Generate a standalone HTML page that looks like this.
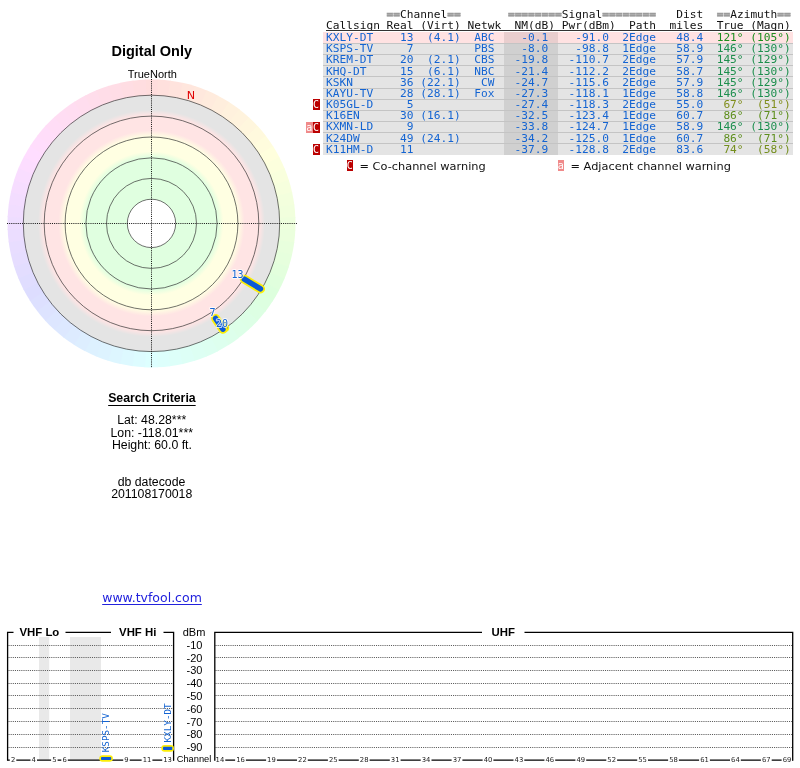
<!DOCTYPE html>
<html><head><meta charset="utf-8"><title>TV Fool - Digital Only</title>
<style>
html,body{margin:0;padding:0;background:#fff;}
body{width:800px;height:768px;position:relative;overflow:hidden;font-family:"Liberation Sans",Arial,sans-serif;color:#000;}
.abs{position:absolute;white-space:pre;}
.c{text-align:center;}
svg{position:absolute;left:0;top:0;}
.mono{font-family:"DejaVu Sans Mono","Liberation Mono",monospace;}
.sans{font-family:"DejaVu Sans","Liberation Sans",sans-serif;}
.row{position:absolute;left:325.9px;height:11px;line-height:11px;font-size:10px;white-space:pre;color:#1464d2;transform:scaleX(1.1187);transform-origin:0 0;}
.g{color:#228844;}
.o{color:#8c8c1e;}
.eq{color:#9c9c9c;font-weight:bold;-webkit-text-stroke:0.5px #9c9c9c;}
.hd{color:#111;}
#w{position:absolute;left:0;top:0;width:800px;height:768px;will-change:transform;background:#fff;}
</style></head><body><div id="w">

<svg width="800" height="768" viewBox="0 0 800 768">
<defs><radialGradient id="rg" gradientUnits="userSpaceOnUse" cx="151.5" cy="223.4" r="128">
<stop offset="0.0000" stop-color="#e0ffe0"/>
<stop offset="0.5156" stop-color="#e0ffe0"/>
<stop offset="0.5625" stop-color="#ffffe2"/>
<stop offset="0.6758" stop-color="#ffffe2"/>
<stop offset="0.7266" stop-color="#ffe4e4"/>
<stop offset="0.8438" stop-color="#ffe4e4"/>
<stop offset="0.8867" stop-color="#e4e4e4"/>
<stop offset="1.0000" stop-color="#e4e4e4"/>
</radialGradient></defs>
<path d="M151.50 223.40 L145.22 79.54 A144 144 0 0 1 158.53 79.57 Z" fill="#ffdddd"/>
<path d="M151.50 223.40 L157.78 79.54 A144 144 0 0 1 171.04 80.73 Z" fill="#ffe0dd"/>
<path d="M151.50 223.40 L170.30 80.63 A144 144 0 0 1 183.40 82.98 Z" fill="#ffe3dd"/>
<path d="M151.50 223.40 L182.67 82.81 A144 144 0 0 1 195.52 86.29 Z" fill="#ffe6dd"/>
<path d="M151.50 223.40 L194.80 86.06 A144 144 0 0 1 207.30 90.65 Z" fill="#ffe8dd"/>
<path d="M151.50 223.40 L206.61 90.36 A144 144 0 0 1 218.66 96.02 Z" fill="#ffebdd"/>
<path d="M151.50 223.40 L217.99 95.67 A144 144 0 0 1 229.51 102.36 Z" fill="#ffeedd"/>
<path d="M151.50 223.40 L228.87 101.95 A144 144 0 0 1 239.76 109.62 Z" fill="#fff1dd"/>
<path d="M151.50 223.40 L239.16 109.16 A144 144 0 0 1 249.34 117.74 Z" fill="#fff3dd"/>
<path d="M151.50 223.40 L248.78 117.23 A144 144 0 0 1 258.18 126.67 Z" fill="#fff6dd"/>
<path d="M151.50 223.40 L257.67 126.12 A144 144 0 0 1 266.20 136.34 Z" fill="#fff9dd"/>
<path d="M151.50 223.40 L265.74 135.74 A144 144 0 0 1 273.35 146.67 Z" fill="#fffcdd"/>
<path d="M151.50 223.40 L272.95 146.03 A144 144 0 0 1 279.58 157.58 Z" fill="#ffffdd"/>
<path d="M151.50 223.40 L279.23 156.91 A144 144 0 0 1 284.83 168.99 Z" fill="#fcffdd"/>
<path d="M151.50 223.40 L284.54 168.29 A144 144 0 0 1 289.06 180.82 Z" fill="#f9ffdd"/>
<path d="M151.50 223.40 L288.84 180.10 A144 144 0 0 1 292.25 192.97 Z" fill="#f6ffdd"/>
<path d="M151.50 223.40 L292.09 192.23 A144 144 0 0 1 294.36 205.35 Z" fill="#f3ffdd"/>
<path d="M151.50 223.40 L294.27 204.60 A144 144 0 0 1 295.39 217.87 Z" fill="#f1ffdd"/>
<path d="M151.50 223.40 L295.36 217.12 A144 144 0 0 1 295.33 230.43 Z" fill="#eeffdd"/>
<path d="M151.50 223.40 L295.36 229.68 A144 144 0 0 1 294.17 242.94 Z" fill="#ebffdd"/>
<path d="M151.50 223.40 L294.27 242.20 A144 144 0 0 1 291.92 255.30 Z" fill="#e8ffdd"/>
<path d="M151.50 223.40 L292.09 254.57 A144 144 0 0 1 288.61 267.42 Z" fill="#e6ffdd"/>
<path d="M151.50 223.40 L288.84 266.70 A144 144 0 0 1 284.25 279.20 Z" fill="#e3ffdd"/>
<path d="M151.50 223.40 L284.54 278.51 A144 144 0 0 1 278.88 290.56 Z" fill="#e0ffdd"/>
<path d="M151.50 223.40 L279.23 289.89 A144 144 0 0 1 272.54 301.41 Z" fill="#ddffdd"/>
<path d="M151.50 223.40 L272.95 300.77 A144 144 0 0 1 265.28 311.66 Z" fill="#ddffe0"/>
<path d="M151.50 223.40 L265.74 311.06 A144 144 0 0 1 257.16 321.24 Z" fill="#ddffe3"/>
<path d="M151.50 223.40 L257.67 320.68 A144 144 0 0 1 248.23 330.08 Z" fill="#ddffe6"/>
<path d="M151.50 223.40 L248.78 329.57 A144 144 0 0 1 238.56 338.10 Z" fill="#ddffe8"/>
<path d="M151.50 223.40 L239.16 337.64 A144 144 0 0 1 228.23 345.25 Z" fill="#ddffeb"/>
<path d="M151.50 223.40 L228.87 344.85 A144 144 0 0 1 217.32 351.48 Z" fill="#ddffee"/>
<path d="M151.50 223.40 L217.99 351.13 A144 144 0 0 1 205.91 356.73 Z" fill="#ddfff1"/>
<path d="M151.50 223.40 L206.61 356.44 A144 144 0 0 1 194.08 360.96 Z" fill="#ddfff3"/>
<path d="M151.50 223.40 L194.80 360.74 A144 144 0 0 1 181.93 364.15 Z" fill="#ddfff6"/>
<path d="M151.50 223.40 L182.67 363.99 A144 144 0 0 1 169.55 366.26 Z" fill="#ddfff9"/>
<path d="M151.50 223.40 L170.30 366.17 A144 144 0 0 1 157.03 367.29 Z" fill="#ddfffc"/>
<path d="M151.50 223.40 L157.78 367.26 A144 144 0 0 1 144.47 367.23 Z" fill="#ddffff"/>
<path d="M151.50 223.40 L145.22 367.26 A144 144 0 0 1 131.96 366.07 Z" fill="#ddfcff"/>
<path d="M151.50 223.40 L132.70 366.17 A144 144 0 0 1 119.60 363.82 Z" fill="#ddf9ff"/>
<path d="M151.50 223.40 L120.33 363.99 A144 144 0 0 1 107.48 360.51 Z" fill="#ddf6ff"/>
<path d="M151.50 223.40 L108.20 360.74 A144 144 0 0 1 95.70 356.15 Z" fill="#ddf3ff"/>
<path d="M151.50 223.40 L96.39 356.44 A144 144 0 0 1 84.34 350.78 Z" fill="#ddf1ff"/>
<path d="M151.50 223.40 L85.01 351.13 A144 144 0 0 1 73.49 344.44 Z" fill="#ddeeff"/>
<path d="M151.50 223.40 L74.13 344.85 A144 144 0 0 1 63.24 337.18 Z" fill="#ddebff"/>
<path d="M151.50 223.40 L63.84 337.64 A144 144 0 0 1 53.66 329.06 Z" fill="#dde8ff"/>
<path d="M151.50 223.40 L54.22 329.57 A144 144 0 0 1 44.82 320.13 Z" fill="#dde6ff"/>
<path d="M151.50 223.40 L45.33 320.68 A144 144 0 0 1 36.80 310.46 Z" fill="#dde3ff"/>
<path d="M151.50 223.40 L37.26 311.06 A144 144 0 0 1 29.65 300.13 Z" fill="#dde0ff"/>
<path d="M151.50 223.40 L30.05 300.77 A144 144 0 0 1 23.42 289.22 Z" fill="#ddddff"/>
<path d="M151.50 223.40 L23.77 289.89 A144 144 0 0 1 18.17 277.81 Z" fill="#e0ddff"/>
<path d="M151.50 223.40 L18.46 278.51 A144 144 0 0 1 13.94 265.98 Z" fill="#e3ddff"/>
<path d="M151.50 223.40 L14.16 266.70 A144 144 0 0 1 10.75 253.83 Z" fill="#e6ddff"/>
<path d="M151.50 223.40 L10.91 254.57 A144 144 0 0 1 8.64 241.45 Z" fill="#e8ddff"/>
<path d="M151.50 223.40 L8.73 242.20 A144 144 0 0 1 7.61 228.93 Z" fill="#ebddff"/>
<path d="M151.50 223.40 L7.64 229.68 A144 144 0 0 1 7.67 216.37 Z" fill="#eeddff"/>
<path d="M151.50 223.40 L7.64 217.12 A144 144 0 0 1 8.83 203.86 Z" fill="#f1ddff"/>
<path d="M151.50 223.40 L8.73 204.60 A144 144 0 0 1 11.08 191.50 Z" fill="#f3ddff"/>
<path d="M151.50 223.40 L10.91 192.23 A144 144 0 0 1 14.39 179.38 Z" fill="#f6ddff"/>
<path d="M151.50 223.40 L14.16 180.10 A144 144 0 0 1 18.75 167.60 Z" fill="#f9ddff"/>
<path d="M151.50 223.40 L18.46 168.29 A144 144 0 0 1 24.12 156.24 Z" fill="#fcddff"/>
<path d="M151.50 223.40 L23.77 156.91 A144 144 0 0 1 30.46 145.39 Z" fill="#ffddff"/>
<path d="M151.50 223.40 L30.05 146.03 A144 144 0 0 1 37.72 135.14 Z" fill="#ffddfc"/>
<path d="M151.50 223.40 L37.26 135.74 A144 144 0 0 1 45.84 125.56 Z" fill="#ffddf9"/>
<path d="M151.50 223.40 L45.33 126.12 A144 144 0 0 1 54.77 116.72 Z" fill="#ffddf6"/>
<path d="M151.50 223.40 L54.22 117.23 A144 144 0 0 1 64.44 108.70 Z" fill="#ffddf3"/>
<path d="M151.50 223.40 L63.84 109.16 A144 144 0 0 1 74.77 101.55 Z" fill="#ffddf1"/>
<path d="M151.50 223.40 L74.13 101.95 A144 144 0 0 1 85.68 95.32 Z" fill="#ffddee"/>
<path d="M151.50 223.40 L85.01 95.67 A144 144 0 0 1 97.09 90.07 Z" fill="#ffddeb"/>
<path d="M151.50 223.40 L96.39 90.36 A144 144 0 0 1 108.92 85.84 Z" fill="#ffdde8"/>
<path d="M151.50 223.40 L108.20 86.06 A144 144 0 0 1 121.07 82.65 Z" fill="#ffdde6"/>
<path d="M151.50 223.40 L120.33 82.81 A144 144 0 0 1 133.45 80.54 Z" fill="#ffdde3"/>
<path d="M151.50 223.40 L132.70 80.63 A144 144 0 0 1 145.97 79.51 Z" fill="#ffdde0"/>
<circle cx="151.5" cy="223.4" r="128" fill="url(#rg)"/>
<circle cx="151.5" cy="223.4" r="24.2" fill="#fff"/>
<circle cx="151.5" cy="223.4" r="24.2" fill="none" stroke="#333" stroke-width="0.7"/>
<circle cx="151.5" cy="223.4" r="45" fill="none" stroke="#333" stroke-width="0.7"/>
<circle cx="151.5" cy="223.4" r="65.6" fill="none" stroke="#333" stroke-width="0.7"/>
<circle cx="151.5" cy="223.4" r="86.4" fill="none" stroke="#333" stroke-width="0.7"/>
<circle cx="151.5" cy="223.4" r="107.3" fill="none" stroke="#333" stroke-width="0.7"/>
<circle cx="151.5" cy="223.4" r="128.2" fill="none" stroke="#333" stroke-width="0.7"/>
<path d="M151.5 79V368" stroke="#111" stroke-width="0.95" stroke-dasharray="1.07 1.07" fill="none"/>
<path d="M7 223.5H297" stroke="#111" stroke-width="0.95" stroke-dasharray="1.07 1.07" fill="none"/>
<text x="191" y="99.2" font-family="DejaVu Sans, sans-serif" font-size="11.2" fill="#e00000" text-anchor="middle">N</text>
<path d="M222.74 325.14 L224.69 327.92" stroke="#fcee08" stroke-width="9" stroke-linecap="round" fill="none"/>
<path d="M222.74 325.14 L224.69 327.92" stroke="#0c5ad6" stroke-width="5.4" stroke-linecap="round" fill="none"/>
<path d="M244.33 279.18 L260.53 288.91" stroke="#fcee08" stroke-width="9" stroke-linecap="round" fill="none"/>
<path d="M244.33 279.18 L260.53 288.91" stroke="#0c5ad6" stroke-width="5.4" stroke-linecap="round" fill="none"/>
<path d="M215.58 318.41 L222.91 329.27" stroke="#fcee08" stroke-width="9" stroke-linecap="round" fill="none"/>
<path d="M215.58 318.41 L222.91 329.27" stroke="#0c5ad6" stroke-width="5.4" stroke-linecap="round" fill="none"/>
<text x="237.5" y="278" font-family="DejaVu Sans Mono, monospace" font-size="10" text-anchor="middle" fill="#1464d2" stroke="#fff" stroke-width="1.8" stroke-linejoin="round" opacity="0.75">13</text>
<text x="237.5" y="278" font-family="DejaVu Sans Mono, monospace" font-size="10" text-anchor="middle" fill="#1464d2">13</text>
<text x="212.4" y="316.2" font-family="DejaVu Sans Mono, monospace" font-size="10" text-anchor="middle" fill="#1464d2" stroke="#fff" stroke-width="1.8" stroke-linejoin="round" opacity="0.75">7</text>
<text x="212.4" y="316.2" font-family="DejaVu Sans Mono, monospace" font-size="10" text-anchor="middle" fill="#1464d2">7</text>
<text x="222" y="327.2" font-family="DejaVu Sans Mono, monospace" font-size="10" text-anchor="middle" fill="#1464d2" stroke="#fff" stroke-width="1.8" stroke-linejoin="round" opacity="0.75">20</text>
<text x="222" y="327.2" font-family="DejaVu Sans Mono, monospace" font-size="10" text-anchor="middle" fill="#1464d2">20</text>
<rect x="39" y="637" width="10.2" height="122.8" fill="#e9e9e9"/>
<rect x="70" y="637" width="31" height="122.8" fill="#e9e9e9"/>
<path d="M8.5 645.5 H173" stroke="#5a5a5a" stroke-width="1" stroke-dasharray="1.07 1.07"/>
<path d="M215.5 645.5 H792" stroke="#5a5a5a" stroke-width="1" stroke-dasharray="1.07 1.07"/>
<path d="M8.5 657.5 H173" stroke="#5a5a5a" stroke-width="1" stroke-dasharray="1.07 1.07"/>
<path d="M215.5 657.5 H792" stroke="#5a5a5a" stroke-width="1" stroke-dasharray="1.07 1.07"/>
<path d="M8.5 670.5 H173" stroke="#5a5a5a" stroke-width="1" stroke-dasharray="1.07 1.07"/>
<path d="M215.5 670.5 H792" stroke="#5a5a5a" stroke-width="1" stroke-dasharray="1.07 1.07"/>
<path d="M8.5 683.5 H173" stroke="#5a5a5a" stroke-width="1" stroke-dasharray="1.07 1.07"/>
<path d="M215.5 683.5 H792" stroke="#5a5a5a" stroke-width="1" stroke-dasharray="1.07 1.07"/>
<path d="M8.5 695.5 H173" stroke="#5a5a5a" stroke-width="1" stroke-dasharray="1.07 1.07"/>
<path d="M215.5 695.5 H792" stroke="#5a5a5a" stroke-width="1" stroke-dasharray="1.07 1.07"/>
<path d="M8.5 708.5 H173" stroke="#5a5a5a" stroke-width="1" stroke-dasharray="1.07 1.07"/>
<path d="M215.5 708.5 H792" stroke="#5a5a5a" stroke-width="1" stroke-dasharray="1.07 1.07"/>
<path d="M8.5 721.5 H173" stroke="#5a5a5a" stroke-width="1" stroke-dasharray="1.07 1.07"/>
<path d="M215.5 721.5 H792" stroke="#5a5a5a" stroke-width="1" stroke-dasharray="1.07 1.07"/>
<path d="M8.5 734.5 H173" stroke="#5a5a5a" stroke-width="1" stroke-dasharray="1.07 1.07"/>
<path d="M215.5 734.5 H792" stroke="#5a5a5a" stroke-width="1" stroke-dasharray="1.07 1.07"/>
<path d="M8.5 747.5 H173" stroke="#5a5a5a" stroke-width="1" stroke-dasharray="1.07 1.07"/>
<path d="M215.5 747.5 H792" stroke="#5a5a5a" stroke-width="1" stroke-dasharray="1.07 1.07"/>
<path d="M7.6 760.2 H173.6 M214.8 760.2 H792.7" stroke="#000" stroke-width="1.3" fill="none"/>
<rect x="9.8" y="755" width="6.5" height="8" fill="#fff"/>
<text x="13.1" y="761.9" font-family="DejaVu Sans, sans-serif" font-size="6.8" text-anchor="middle" fill="#222">2</text>
<rect x="30.5" y="755" width="6.5" height="8" fill="#fff"/>
<text x="33.7" y="761.9" font-family="DejaVu Sans, sans-serif" font-size="6.8" text-anchor="middle" fill="#222">4</text>
<rect x="51.1" y="755" width="6.5" height="8" fill="#fff"/>
<text x="54.3" y="761.9" font-family="DejaVu Sans, sans-serif" font-size="6.8" text-anchor="middle" fill="#222">5</text>
<rect x="61.3" y="755" width="6.5" height="8" fill="#fff"/>
<text x="64.6" y="761.9" font-family="DejaVu Sans, sans-serif" font-size="6.8" text-anchor="middle" fill="#222">6</text>
<rect x="123.2" y="755" width="6.5" height="8" fill="#fff"/>
<text x="126.4" y="761.9" font-family="DejaVu Sans, sans-serif" font-size="6.8" text-anchor="middle" fill="#222">9</text>
<rect x="141.6" y="755" width="10.8" height="8" fill="#fff"/>
<text x="147.0" y="761.9" font-family="DejaVu Sans, sans-serif" font-size="6.8" text-anchor="middle" fill="#222">11</text>
<rect x="162.2" y="755" width="10.8" height="8" fill="#fff"/>
<text x="167.6" y="761.9" font-family="DejaVu Sans, sans-serif" font-size="6.8" text-anchor="middle" fill="#222">13</text>
<rect x="214.5" y="755" width="10.8" height="8" fill="#fff"/>
<text x="219.9" y="761.9" font-family="DejaVu Sans, sans-serif" font-size="6.8" text-anchor="middle" fill="#222">14</text>
<rect x="235.1" y="755" width="10.8" height="8" fill="#fff"/>
<text x="240.5" y="761.9" font-family="DejaVu Sans, sans-serif" font-size="6.8" text-anchor="middle" fill="#222">16</text>
<rect x="266.1" y="755" width="10.8" height="8" fill="#fff"/>
<text x="271.4" y="761.9" font-family="DejaVu Sans, sans-serif" font-size="6.8" text-anchor="middle" fill="#222">19</text>
<rect x="297.0" y="755" width="10.8" height="8" fill="#fff"/>
<text x="302.4" y="761.9" font-family="DejaVu Sans, sans-serif" font-size="6.8" text-anchor="middle" fill="#222">22</text>
<rect x="327.9" y="755" width="10.8" height="8" fill="#fff"/>
<text x="333.3" y="761.9" font-family="DejaVu Sans, sans-serif" font-size="6.8" text-anchor="middle" fill="#222">25</text>
<rect x="358.8" y="755" width="10.8" height="8" fill="#fff"/>
<text x="364.2" y="761.9" font-family="DejaVu Sans, sans-serif" font-size="6.8" text-anchor="middle" fill="#222">28</text>
<rect x="389.8" y="755" width="10.8" height="8" fill="#fff"/>
<text x="395.2" y="761.9" font-family="DejaVu Sans, sans-serif" font-size="6.8" text-anchor="middle" fill="#222">31</text>
<rect x="420.7" y="755" width="10.8" height="8" fill="#fff"/>
<text x="426.1" y="761.9" font-family="DejaVu Sans, sans-serif" font-size="6.8" text-anchor="middle" fill="#222">34</text>
<rect x="451.6" y="755" width="10.8" height="8" fill="#fff"/>
<text x="457.0" y="761.9" font-family="DejaVu Sans, sans-serif" font-size="6.8" text-anchor="middle" fill="#222">37</text>
<rect x="482.6" y="755" width="10.8" height="8" fill="#fff"/>
<text x="488.0" y="761.9" font-family="DejaVu Sans, sans-serif" font-size="6.8" text-anchor="middle" fill="#222">40</text>
<rect x="513.5" y="755" width="10.8" height="8" fill="#fff"/>
<text x="518.9" y="761.9" font-family="DejaVu Sans, sans-serif" font-size="6.8" text-anchor="middle" fill="#222">43</text>
<rect x="544.4" y="755" width="10.8" height="8" fill="#fff"/>
<text x="549.8" y="761.9" font-family="DejaVu Sans, sans-serif" font-size="6.8" text-anchor="middle" fill="#222">46</text>
<rect x="575.4" y="755" width="10.8" height="8" fill="#fff"/>
<text x="580.8" y="761.9" font-family="DejaVu Sans, sans-serif" font-size="6.8" text-anchor="middle" fill="#222">49</text>
<rect x="606.3" y="755" width="10.8" height="8" fill="#fff"/>
<text x="611.7" y="761.9" font-family="DejaVu Sans, sans-serif" font-size="6.8" text-anchor="middle" fill="#222">52</text>
<rect x="637.2" y="755" width="10.8" height="8" fill="#fff"/>
<text x="642.6" y="761.9" font-family="DejaVu Sans, sans-serif" font-size="6.8" text-anchor="middle" fill="#222">55</text>
<rect x="668.1" y="755" width="10.8" height="8" fill="#fff"/>
<text x="673.5" y="761.9" font-family="DejaVu Sans, sans-serif" font-size="6.8" text-anchor="middle" fill="#222">58</text>
<rect x="699.1" y="755" width="10.8" height="8" fill="#fff"/>
<text x="704.5" y="761.9" font-family="DejaVu Sans, sans-serif" font-size="6.8" text-anchor="middle" fill="#222">61</text>
<rect x="730.0" y="755" width="10.8" height="8" fill="#fff"/>
<text x="735.4" y="761.9" font-family="DejaVu Sans, sans-serif" font-size="6.8" text-anchor="middle" fill="#222">64</text>
<rect x="760.9" y="755" width="10.8" height="8" fill="#fff"/>
<text x="766.3" y="761.9" font-family="DejaVu Sans, sans-serif" font-size="6.8" text-anchor="middle" fill="#222">67</text>
<rect x="781.6" y="755" width="10.8" height="8" fill="#fff"/>
<text x="787.0" y="761.9" font-family="DejaVu Sans, sans-serif" font-size="6.8" text-anchor="middle" fill="#222">69</text>
<path d="M13.5 632.4 H7.6 V760.8" stroke="#000" stroke-width="1.3" fill="none"/>
<path d="M163.5 632.4 H173.6 V760.8" stroke="#000" stroke-width="1.3" fill="none"/>
<path d="M65.5 632.4 H111" stroke="#000" stroke-width="1.3" fill="none"/>
<path d="M482 632.4 H214.8 V760.8" stroke="#000" stroke-width="1.3" fill="none"/>
<path d="M524.5 632.4 H792.7 V760.8" stroke="#000" stroke-width="1.3" fill="none"/>
<rect x="99.3" y="755.2" width="13.6" height="6.6" rx="3.3" fill="#fcee08"/>
<rect x="101.0" y="756.9" width="10.2" height="3.2" rx="0.8" fill="#0c5ad6"/>
<rect x="161.3" y="745.1" width="12.7" height="6.6" rx="3.3" fill="#fcee08"/>
<rect x="163.0" y="746.8" width="9.3" height="3.2" rx="0.8" fill="#0c5ad6"/>
<text transform="translate(109,752.3) rotate(-90)" font-family="DejaVu Sans Mono, monospace" font-size="9.3" fill="#1464d2">KSPS-TV</text>
<text transform="translate(170.5,742.5) rotate(-90)" font-family="DejaVu Sans Mono, monospace" font-size="9.3" fill="#1464d2">KXLY-DT</text>
</svg>
<div class="abs c " style="left:-48.25px;width:400px;top:43.83px;font-size:14.5px;line-height:14.5px;font-weight:bold;">Digital Only</div>
<div class="abs c " style="left:-47.7px;width:400px;top:68.69px;font-size:11px;line-height:11px;">TrueNorth</div>
<div class="abs c " style="left:-48.1px;width:400px;top:391.79px;font-size:12.3px;line-height:12.3px;font-weight:bold;text-decoration:underline;text-underline-offset:2.6px;text-decoration-thickness:1px;">Search Criteria</div>
<div class="abs c " style="left:-48.3px;width:400px;top:414.49px;font-size:12.3px;line-height:12.3px;">Lat: 48.28***</div>
<div class="abs c " style="left:-48.3px;width:400px;top:427.49px;font-size:12.3px;line-height:12.3px;">Lon: -118.01***</div>
<div class="abs c " style="left:-48.1px;width:400px;top:439.39px;font-size:12.3px;line-height:12.3px;">Height: 60.0 ft.</div>
<div class="abs c " style="left:-48.5px;width:400px;top:476.39px;font-size:12.3px;line-height:12.3px;">db datecode</div>
<div class="abs c " style="left:-48.3px;width:400px;top:488.19px;font-size:12.3px;line-height:12.3px;">201108170018</div>
<div class="abs c sans" style="left:-48px;width:400px;top:592.42px;font-size:12.5px;line-height:12.5px;color:#2222dd;text-decoration:underline;text-underline-offset:2.2px;text-decoration-thickness:1px;">www.tvfool.com</div>
<div class="abs c " style="left:-160.6px;width:400px;top:627.05px;font-size:11.4px;line-height:11.4px;font-weight:bold;">VHF Lo</div>
<div class="abs c " style="left:-62.3px;width:400px;top:627.05px;font-size:11.4px;line-height:11.4px;font-weight:bold;">VHF Hi</div>
<div class="abs c " style="left:303.2px;width:400px;top:627.05px;font-size:11.4px;line-height:11.4px;font-weight:bold;">UHF</div>
<div class="abs c " style="left:-6px;width:400px;top:626.69px;font-size:11px;line-height:11px;">dBm</div>
<div class="abs c " style="left:-5.5px;width:400px;top:639.89px;font-size:11px;line-height:11px;">-10</div>
<div class="abs c " style="left:-5.5px;width:400px;top:652.67px;font-size:11px;line-height:11px;">-20</div>
<div class="abs c " style="left:-5.5px;width:400px;top:665.45px;font-size:11px;line-height:11px;">-30</div>
<div class="abs c " style="left:-5.5px;width:400px;top:678.23px;font-size:11px;line-height:11px;">-40</div>
<div class="abs c " style="left:-5.5px;width:400px;top:691.01px;font-size:11px;line-height:11px;">-50</div>
<div class="abs c " style="left:-5.5px;width:400px;top:703.79px;font-size:11px;line-height:11px;">-60</div>
<div class="abs c " style="left:-5.5px;width:400px;top:716.57px;font-size:11px;line-height:11px;">-70</div>
<div class="abs c " style="left:-5.5px;width:400px;top:729.35px;font-size:11px;line-height:11px;">-80</div>
<div class="abs c " style="left:-5.5px;width:400px;top:742.13px;font-size:11px;line-height:11px;">-90</div>
<div class="abs c " style="left:-6px;width:400px;top:755.13px;font-size:9.3px;line-height:9.3px;">Channel</div>
<div class="abs" style="left:323px;top:32.40px;width:470px;height:122.98px;background:#e4e4e4;"></div>
<div class="abs" style="left:323px;top:32.40px;width:470px;height:10.58px;background:#ffe2e2;"></div>
<div class="abs" style="left:504px;top:32.40px;width:54px;height:122.98px;background:rgba(0,0,0,0.085);"></div>
<div class="abs" style="left:323px;top:42.78px;width:470px;height:1px;background:#c4c4c4;"></div>
<div class="abs" style="left:323px;top:53.96px;width:470px;height:1px;background:#c4c4c4;"></div>
<div class="abs" style="left:323px;top:65.14px;width:470px;height:1px;background:#c4c4c4;"></div>
<div class="abs" style="left:323px;top:76.32px;width:470px;height:1px;background:#c4c4c4;"></div>
<div class="abs" style="left:323px;top:87.50px;width:470px;height:1px;background:#c4c4c4;"></div>
<div class="abs" style="left:323px;top:98.68px;width:470px;height:1px;background:#c4c4c4;"></div>
<div class="abs" style="left:323px;top:109.86px;width:470px;height:1px;background:#c4c4c4;"></div>
<div class="abs" style="left:323px;top:121.04px;width:470px;height:1px;background:#c4c4c4;"></div>
<div class="abs" style="left:323px;top:132.22px;width:470px;height:1px;background:#c4c4c4;"></div>
<div class="abs" style="left:323px;top:143.40px;width:470px;height:1px;background:#c4c4c4;"></div>
<div class="row mono hd" style="top:8.84px;left:325.90px;">         <span class="eq">==</span>Channel<span class="eq">==</span>       <span class="eq">========</span>Signal<span class="eq">========</span>   Dist  <span class="eq">==</span>Azimuth<span class="eq">==</span></div>
<div class="row mono hd" style="top:19.74px;left:325.90px;">Callsign Real (Virt) Netwk  NM(dB) Pwr(dBm)  Path  miles  True (Magn)</div>
<div class="abs" style="left:326px;top:29.6px;width:466px;height:1px;background:#333;"></div>
<div class="row mono " style="top:32.04px;left:325.90px;">KXLY-DT    13  (4.1)  ABC    -0.1    -91.0  2Edge   48.4  <span style="color:#1c8e1e">121° (105°)</span></div>
<div class="row mono " style="top:43.22px;left:325.90px;">KSPS-TV     7         PBS    -8.0    -98.8  1Edge   58.9  <span style="color:#1c8e4e">146° (130°)</span></div>
<div class="row mono " style="top:54.40px;left:325.90px;">KREM-DT    20  (2.1)  CBS   -19.8   -110.7  2Edge   57.9  <span style="color:#1c8e4c">145° (129°)</span></div>
<div class="row mono " style="top:65.58px;left:325.90px;">KHQ-DT     15  (6.1)  NBC   -21.4   -112.2  2Edge   58.7  <span style="color:#1c8e4c">145° (130°)</span></div>
<div class="row mono " style="top:76.76px;left:325.90px;">KSKN       36 (22.1)   CW   -24.7   -115.6  2Edge   57.9  <span style="color:#1c8e4c">145° (129°)</span></div>
<div class="row mono " style="top:87.94px;left:325.90px;">KAYU-TV    28 (28.1)  Fox   -27.3   -118.1  1Edge   58.8  <span style="color:#1c8e4e">146° (130°)</span></div>
<div class="row mono " style="top:99.12px;left:325.90px;">K05GL-D     5               -27.4   -118.3  2Edge   55.0  <span style="color:#818e1c"> 67°  (51°)</span></div>
<div class="abs mono" style="left:312.75px;top:99.18px;width:6.75px;height:11px;background:#bb0000;color:#fff;font-size:10px;line-height:11px;text-align:center;">C</div>
<div class="row mono " style="top:110.30px;left:325.90px;">K16EN      30 (16.1)        -32.5   -123.4  1Edge   60.7  <span style="color:#5d8e1c"> 86°  (71°)</span></div>
<div class="row mono " style="top:121.48px;left:325.90px;">KXMN-LD     9               -33.8   -124.7  1Edge   58.9  <span style="color:#1c8e4e">146° (130°)</span></div>
<div class="abs mono" style="left:312.75px;top:121.54px;width:6.75px;height:11px;background:#bb0000;color:#fff;font-size:10px;line-height:11px;text-align:center;">C</div>
<div class="abs mono" style="left:306px;top:121.54px;width:6.75px;height:11px;background:#f08a8a;color:#fff;font-size:10px;line-height:11px;text-align:center;">a</div>
<div class="row mono " style="top:132.66px;left:325.90px;">K24DW      49 (24.1)        -34.2   -125.0  1Edge   60.7  <span style="color:#5d8e1c"> 86°  (71°)</span></div>
<div class="row mono " style="top:143.84px;left:325.90px;">K11HM-D    11               -37.9   -128.8  2Edge   83.6  <span style="color:#748e1c"> 74°  (58°)</span></div>
<div class="abs mono" style="left:312.75px;top:143.90px;width:6.75px;height:11px;background:#bb0000;color:#fff;font-size:10px;line-height:11px;text-align:center;">C</div>
<div class="abs mono" style="left:346.5px;top:159.7px;width:6.75px;height:11px;background:#bb0000;color:#fff;font-size:10px;line-height:11px;text-align:center;">C</div>
<div class="abs sans" style="left:359.5px;top:160.5px;font-size:11.35px;line-height:11px;color:#111;">= Co-channel warning</div>
<div class="abs mono" style="left:557.5px;top:159.7px;width:6.75px;height:11px;background:#f08a8a;color:#fff;font-size:10px;line-height:11px;text-align:center;">a</div>
<div class="abs sans" style="left:570.5px;top:160.5px;font-size:11.35px;line-height:11px;color:#111;">= Adjacent channel warning</div>
</div></body></html>
